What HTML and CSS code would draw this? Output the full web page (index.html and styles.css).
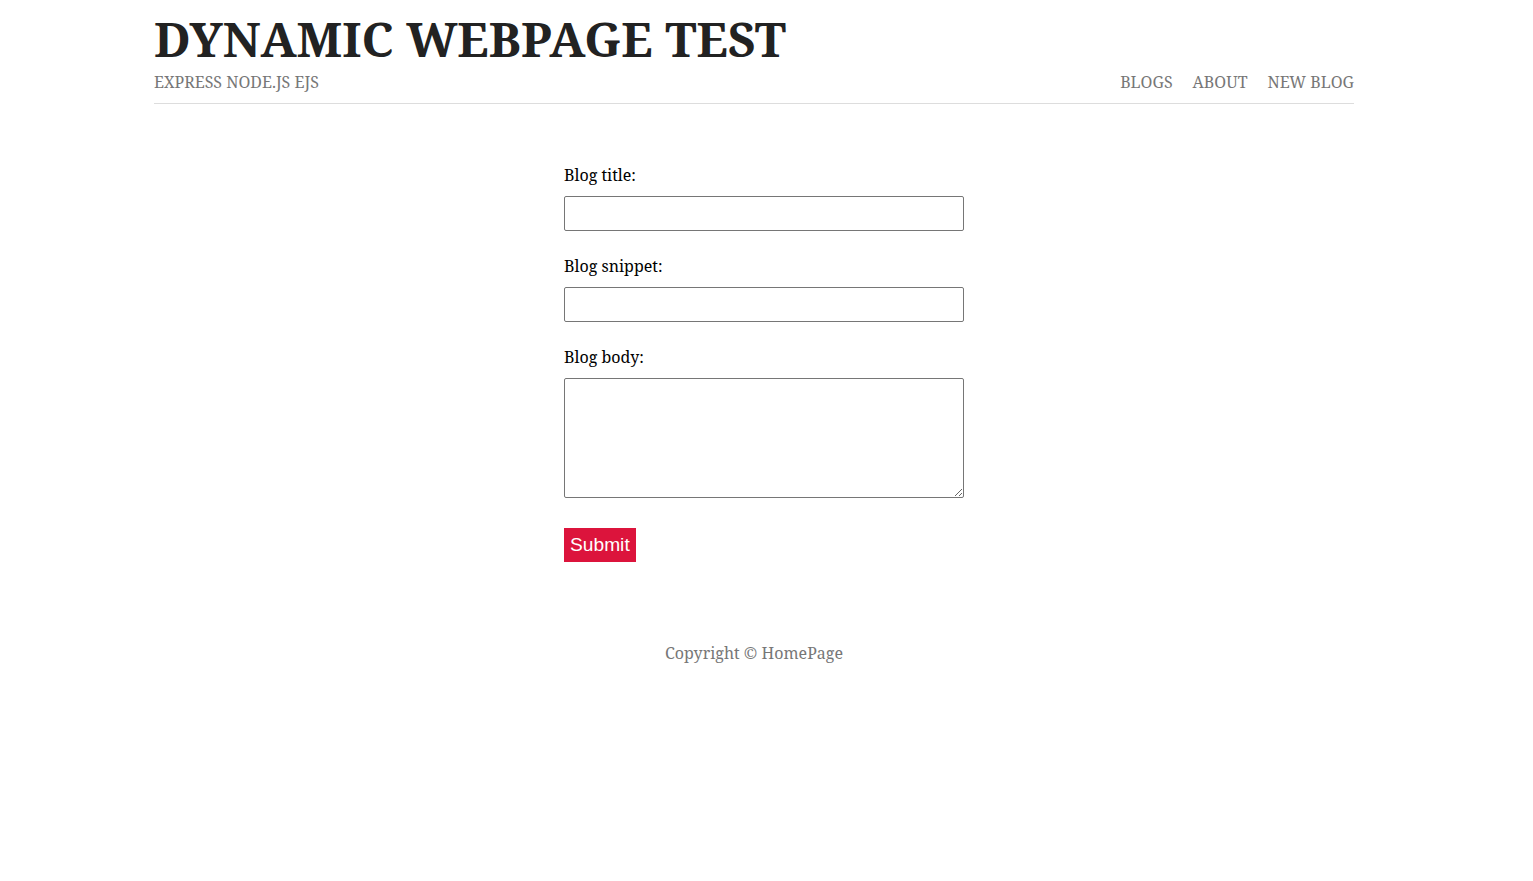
FILE: index.html
```html
<!DOCTYPE html>
<html lang="en">
<head>
<meta charset="utf-8">
<title>Dynamic Webpage Test</title>
<link rel="stylesheet" href="styles.css">
</head>
<body>
  <div class="page">
    <header class="site-header">
      <h1 class="site-title">DYNAMIC WEBPAGE TEST</h1>
      <div class="header-bar">
        <p class="tagline">EXPRESS NODE.JS EJS</p>
        <nav class="nav">
          <a href="#" class="nav-link">BLOGS</a>
          <a href="#" class="nav-link">ABOUT</a>
          <a href="#" class="nav-link">NEW BLOG</a>
        </nav>
      </div>
    </header>

    <main class="create-blog">
      <form class="blog-form">
        <label class="field-label" for="title">Blog title:</label>
        <input class="field-input" type="text" id="title" name="title">
        <label class="field-label" for="snippet">Blog snippet:</label>
        <input class="field-input" type="text" id="snippet" name="snippet">
        <label class="field-label" for="body">Blog body:</label>
        <textarea class="field-area" id="body" name="body"></textarea>
        <button class="submit-btn" type="submit">Submit</button>
      </form>
    </main>

    <footer class="site-footer">Copyright &copy; HomePage</footer>
  </div>
</body>
</html>
```

FILE: styles.css
```css
html, body {
  margin: 0;
  padding: 0;
  background: #fff;
}

body {
  font-family: "Noto Serif", "DejaVu Serif", serif;
  color: #222;
  padding-right: 25px;
}

.page {
  width: 1200px;
  margin: 0 auto;
}

.site-header {
  padding-top: 10px;
}

.site-title {
  margin: 0;
  font-size: 48px;
  line-height: 58px;
  font-weight: 700;
  color: #222;
}

.header-bar {
  display: flex;
  justify-content: space-between;
  align-items: center;
  border-bottom: 1px solid #ddd;
  padding: 2px 0 9px;
}

.tagline {
  margin: 0;
  font-size: 16px;
  line-height: 24px;
  color: #777;
}

.nav {
  display: flex;
  gap: 20px;
}

.nav-link {
  font-size: 16px;
  line-height: 24px;
  color: #777;
  text-decoration: none;
}

.create-blog {
  display: flex;
  justify-content: center;
  padding: 59px 0 0 20px;
}

.blog-form {
  width: 400px;
  display: flex;
  flex-direction: column;
}

.field-label {
  font-size: 16px;
  line-height: 24px;
  color: #000;
  margin-bottom: 9px;
}

.field-input,
.field-area {
  box-sizing: border-box;
  width: 400px;
  border: 1px solid #767676;
  border-radius: 2px;
  margin: 0 0 23px;
  font-family: inherit;
  font-size: 16px;
}

.field-input {
  height: 35px;
}

.field-area {
  height: 120px;
  resize: vertical;
  margin-bottom: 30px;
}

.submit-btn {
  align-self: flex-start;
  background: #dc143c;
  color: #fff;
  border: none;
  border-radius: 0;
  font-family: "Liberation Sans", Arial, sans-serif;
  font-size: 19.2px;
  height: 34px;
  padding: 0 6px;
  cursor: pointer;
}

.site-footer {
  text-align: center;
  color: #777;
  font-size: 16px;
  line-height: 24px;
  margin-top: 79px;
}
```
